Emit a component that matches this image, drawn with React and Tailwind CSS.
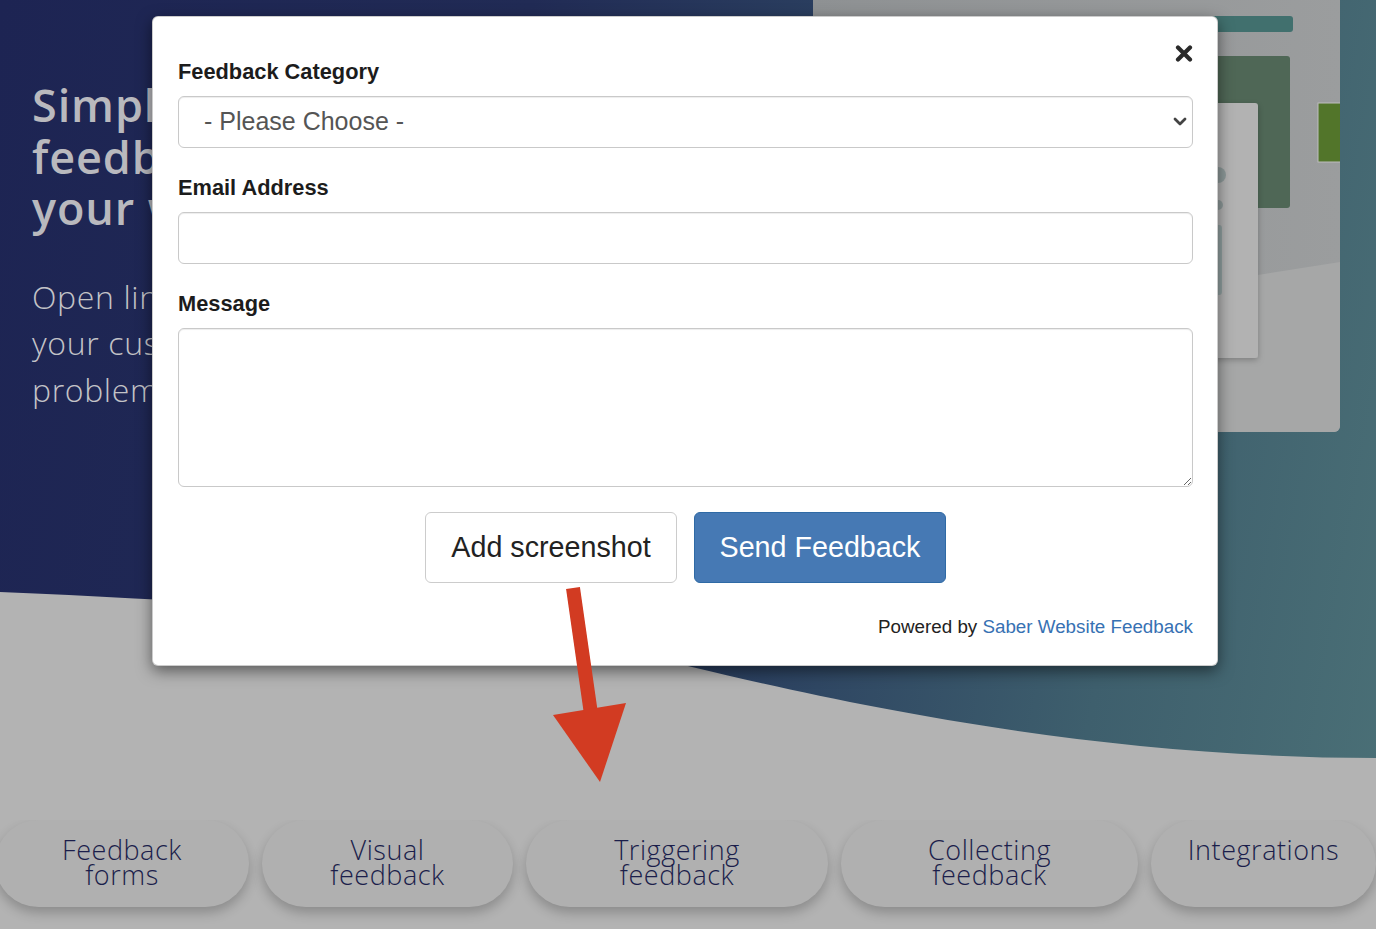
const tabs = [
  { label: ['Feedback', 'forms'], width: 'w-[254px]' },
  { label: ['Visual', 'feedback'], width: 'w-[251px]' },
  { label: ['Triggering', 'feedback'], width: 'w-[302px]' },
  { label: ['Collecting', 'feedback'], width: 'w-[297px]' },
  { label: ['Integrations'], width: 'w-[225px]' },
];

function Illustration() {
  return (
    <svg width="527" height="432" viewBox="0 0 527 432" className="block">
      <defs>
        <linearGradient id="panel" x1="0" y1="0" x2="1" y2="0">
          <stop offset="0" stopColor="#8e9193" />
          <stop offset="1" stopColor="#9b9d9e" />
        </linearGradient>
        <filter id="soft" x="-20%" y="-10%" width="140%" height="120%">
          <feDropShadow dx="0" dy="2" stdDeviation="3" floodColor="#000" floodOpacity="0.25" />
        </filter>
      </defs>
      <rect width="527" height="432" fill="url(#panel)" />
      <polygon points="0,345 527,262 527,432 0,432" fill="#a6a7a7" />
      <rect x="330" y="16" width="150" height="16" rx="3" fill="#41706e" />
      <rect x="330" y="56" width="147" height="152" rx="3" fill="#4f6756" />
      <rect x="300" y="103" width="145" height="255" rx="3" fill="#b2b2b2" filter="url(#soft)" />
      <circle cx="405" cy="175" r="8" fill="#8d9999" />
      <circle cx="405" cy="205" r="5" fill="#8d9999" />
      <rect x="340" y="225" width="69" height="70" rx="3" fill="#91a0a0" />
      <rect x="505" y="103" width="30" height="59" fill="#52752a" stroke="#bdbdbd" strokeWidth="1" />
    </svg>
  );
}

function Modal() {
  return (
    <div className="absolute left-[152px] top-[16px] z-20 w-[1066px] rounded-[6px] border border-black/20 bg-white pl-[25px] pr-[24px] pt-[43px] pb-[27px] font-['Liberation_Sans',Arial,sans-serif] text-[#222] shadow-[0_5px_15px_rgba(0,0,0,0.5)]">
      <button className="absolute right-[24px] top-[27px] flex h-[18px] w-[18px] items-center justify-center">
        <svg width="18" height="17" viewBox="0 0 18 17">
          <path d="M3 2.5 L15 14.5 M15 2.5 L3 14.5" stroke="#2a2a2a" strokeWidth="4.2" strokeLinecap="round" />
        </svg>
      </button>

      <label className="block text-[21.8px] font-bold leading-[24px] text-[#1c1c1c]">Feedback Category</label>
      <div className="relative mt-[12px]">
        <select className="h-[52px] w-full appearance-none rounded-[6px] border border-[#c9c9c9] bg-white pl-[25px] text-[25px] text-[#555] shadow-[inset_0_1px_1px_rgba(0,0,0,0.075)] outline-none">
          <option>- Please Choose -</option>
        </select>
        <svg className="pointer-events-none absolute right-[6px] top-[21px]" width="14" height="10" viewBox="0 0 14 10">
          <path d="M2 2 L7 7 L12 2" fill="none" stroke="#444" strokeWidth="2.8" strokeLinecap="round" strokeLinejoin="round" />
        </svg>
      </div>

      <label className="mt-[28px] block text-[21.8px] font-bold leading-[24px] text-[#1c1c1c]">Email Address</label>
      <input
        type="email"
        className="mt-[12px] block h-[52px] w-full rounded-[6px] border border-[#c9c9c9] bg-white px-[12px] text-[24px] shadow-[inset_0_1px_1px_rgba(0,0,0,0.075)] outline-none"
      />

      <label className="mt-[28px] block text-[21.8px] font-bold leading-[24px] text-[#1c1c1c]">Message</label>
      <textarea className="mt-[12px] block h-[159px] w-full rounded-[6px] border border-[#c9c9c9] bg-white px-[12px] py-[8px] text-[24px] shadow-[inset_0_1px_1px_rgba(0,0,0,0.075)] outline-none" />

      <div className="mt-[25px] flex justify-center gap-[17px]">
        <button className="h-[71px] w-[252px] rounded-[6px] border border-[#cccccc] bg-white text-[28.7px] text-[#222]">
          Add screenshot
        </button>
        <button className="h-[71px] w-[252px] rounded-[6px] border border-[#2f6aa5] bg-[#4679b4] text-[28.7px] text-white">
          Send Feedback
        </button>
      </div>

      <p className="mt-[33px] text-right text-[18.8px] leading-[22px] text-[#222]">
        Powered by <a href="#saber" className="text-[#3771b3]">Saber Website Feedback</a>
      </p>
    </div>
  );
}

export default function App() {
  return (
    <div className="relative h-[929px] w-full overflow-hidden bg-[#b3b3b3]">
      <section className="relative h-[820px] bg-[linear-gradient(100deg,#1d2453_0%,#212b55_35%,#2c4261_58%,#3e5f6d_80%,#4a6f76_100%)]">
        <svg className="absolute inset-0 h-full w-full" viewBox="0 0 1376 820" preserveAspectRatio="none">
          <path
            d="M0 592 C300 605 500 620 692 667 C850 705 1100 758 1376 758 L1376 820 L0 820 Z"
            fill="#b3b3b3"
          />
        </svg>

        <div className="relative flex justify-between">
          <div className="w-[152px] overflow-hidden pl-[32px] pt-[79px] font-['Open_Sans',sans-serif]">
            <h1 className="whitespace-nowrap text-[45px] font-semibold leading-[51.5px] tracking-[0.02em] text-[#b9b9be]">
              Simple
              <br />
              feedback for
              <br />
              your website
            </h1>
            <p className="mt-[40px] whitespace-nowrap text-[32px] font-light leading-[46.5px] tracking-[0.02em] text-[#c3c3c7]">
              Open lines of communication with
              <br />
              your customers and fix
              <br />
              problems faster.
            </p>
          </div>
          <div className="mr-[36px] h-[432px] w-[527px] overflow-hidden rounded-b-[6px]">
            <Illustration />
          </div>
        </div>
      </section>

      <nav className="ml-[-5px] flex gap-[13px]">
        {tabs.map((tab) => (
          <div
            key={tab.label.join(' ')}
            className={`${tab.width} h-[87px] shrink-0 rounded-[44px] bg-[#b0b0b0] pt-[17px] text-center font-['Open_Sans',sans-serif] text-[27px] font-light leading-[25px] tracking-[0.02em] text-[#1b1e4b] shadow-[0_6px_12px_rgba(0,0,0,0.22)]`}
          >
            {tab.label.map((line) => (
              <div key={line}>{line}</div>
            ))}
          </div>
        ))}
      </nav>

      <Modal />

      <svg className="absolute left-[540px] top-[580px] z-30" width="100" height="210" viewBox="0 0 100 210">
        <line x1="33" y1="8" x2="51" y2="134" stroke="#d23b22" strokeWidth="14" />
        <polygon points="13,135 86,123 60,202" fill="#d23b22" />
      </svg>
    </div>
  );
}
